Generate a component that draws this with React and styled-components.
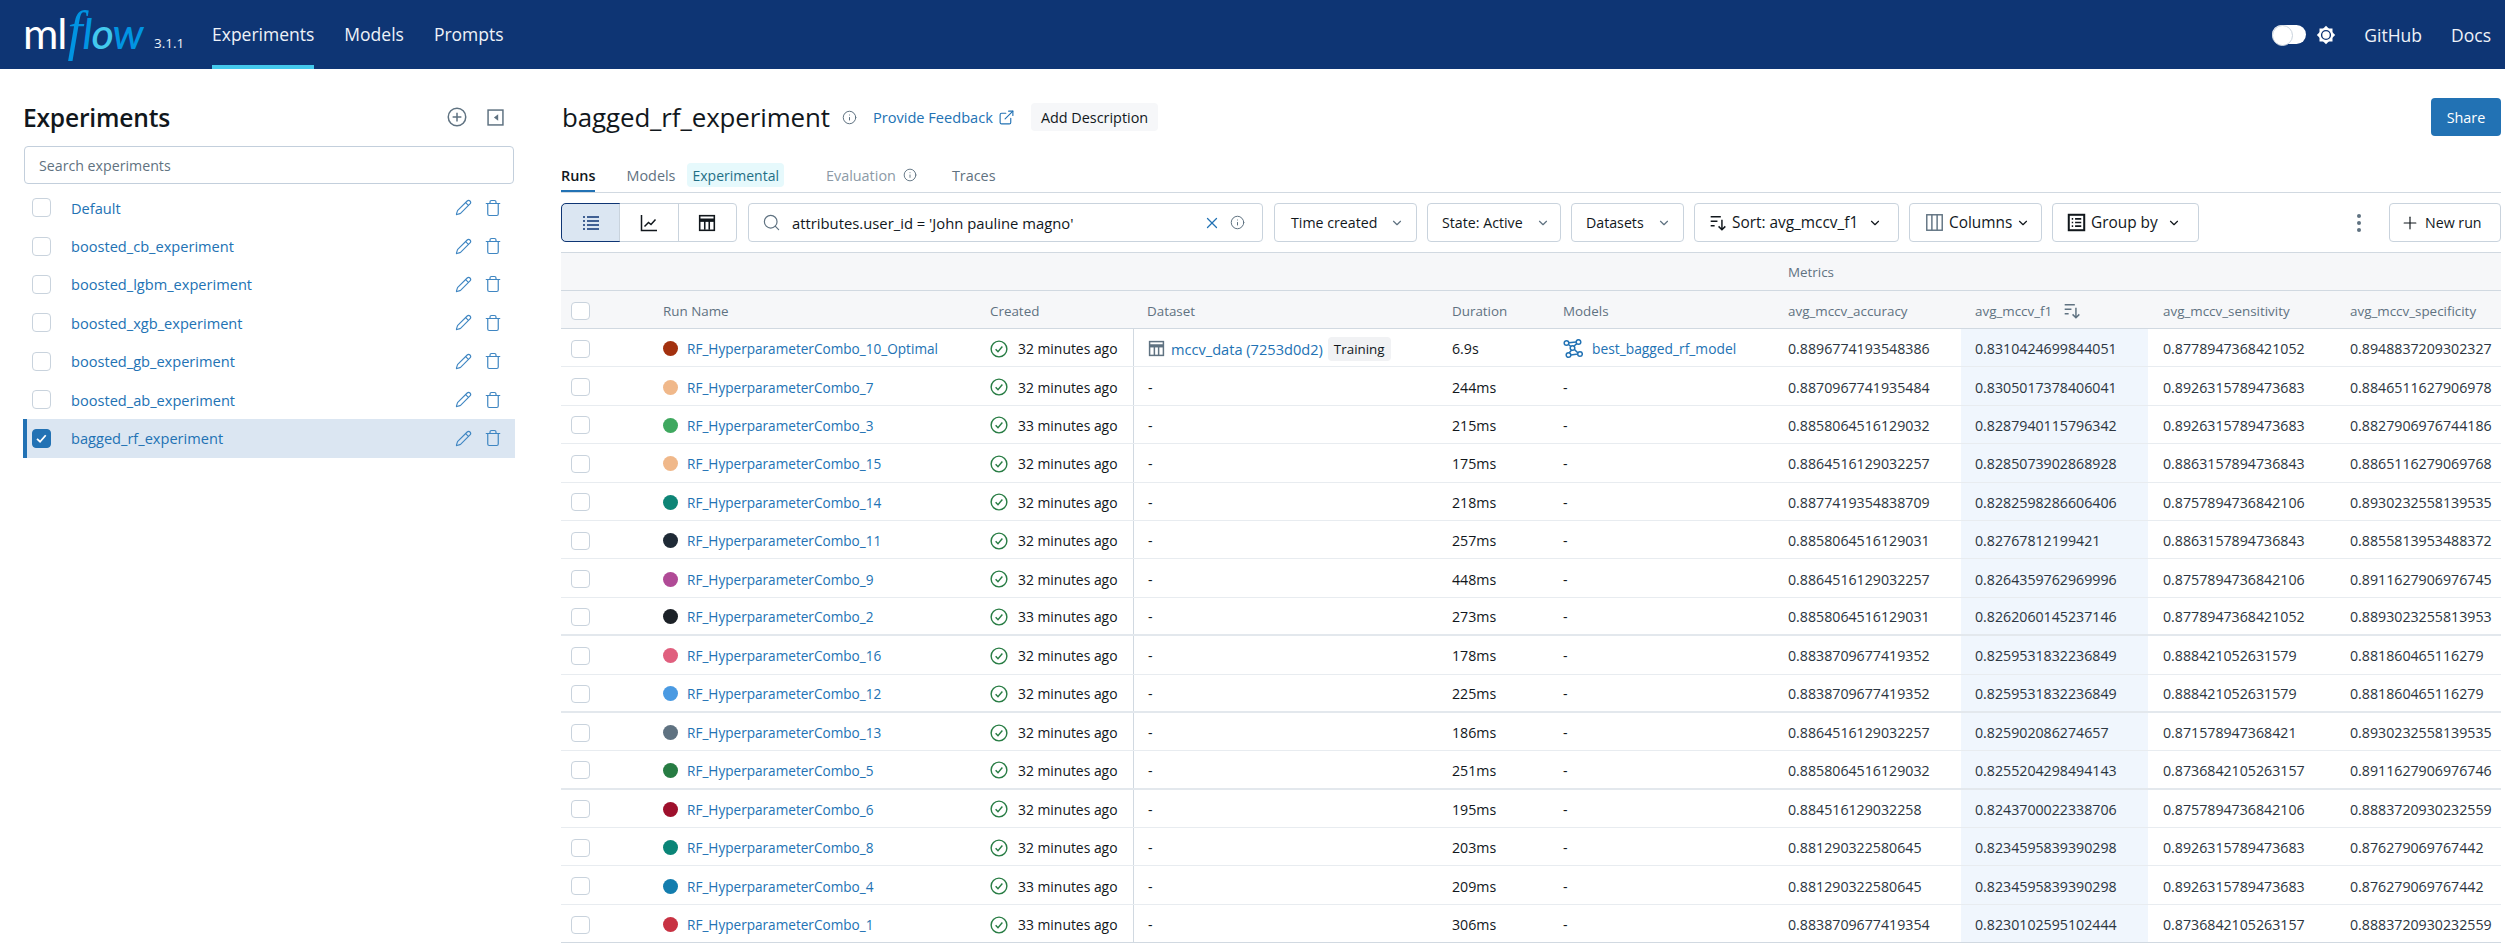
import React from 'react';
import styled, { createGlobalStyle } from 'styled-components';
import { Pencil, Trash, Search, X, Info, ExternalLink, Plus, ChevronDown } from 'lucide-react';

const FONT = '"Open Sans", "Noto Sans", "Liberation Sans", sans-serif';
const LINK = '#2272b4';
const TEXT = '#11171c';
const MUTED = '#5f7281';
const EDGE = '#c9d3dd';
const COLS = '102px 327px 143px 319px 111px 212px 186px 187px 188px 165px';

const Global = createGlobalStyle`
  html, body { margin: 0; padding: 0; background: #fff; }
  body { font-family: ${FONT}; color: ${TEXT}; font-size: 14px; overflow: hidden; }
  * { box-sizing: border-box; }
`;

const Page = styled.div`width: 2505px; height: 952px; display: flex; flex-direction: column; overflow: hidden;`;

const TopBar = styled.header`
  height: 69px; background: #0e3574; color: #eef2f8; display: flex; align-items: stretch; padding: 0 14px 0 23px; flex: none;
`;
const Logo = styled.div`
  width: 131px; height: 69px; display: flex; align-items: baseline; font-family: "Lato", sans-serif; font-size: 43px; line-height: 66px; letter-spacing: -1px; color: #fff; white-space: nowrap;
`;
const LogoFlow = styled.span`font-style: italic; color: #0194e2; font-weight: 500; margin-left: 1px;`;
const LogoF = styled.span`font-family: "Liberation Serif", serif; font-size: 54px; font-weight: 400; margin-right: 1px; line-height: 40px;`;
const LogoO = styled.span`color: #43c9ed;`;
const Version = styled.div`font-size: 13.5px; line-height: 1; align-self: flex-end; margin-bottom: 19px; width: 58px; color: #eef2f8;`;
const NavTab = styled.a`
  font-size: 17.5px; display: flex; align-items: center; height: 69px; margin-right: ${p => p.$gap}px; padding-bottom: 1px;
  border-bottom: 4px solid ${p => (p.$active ? '#43c9ed' : 'transparent')}; padding-top: 4px;
`;
const NavRight = styled.div`margin-left: auto; display: flex; align-items: center; font-size: 17.5px;`;
const Toggle = styled.div`
  width: 34px; height: 19px; border-radius: 10px; background: #fff; position: relative; margin-right: 10px;
  &::after { content: ''; position: absolute; left: 0; top: 0; width: 19px; height: 19px; border-radius: 50%; border: 1px solid #c9d3dd; background: #fff; }
`;
const NavLink = styled.a`margin-left: ${p => p.$gap}px;`;

const Body = styled.div`flex: 1; display: flex; min-height: 0;`;

const Sidebar = styled.aside`width: 561px; flex: none; padding: 29px 0 0 23px;`;
const SideInner = styled.div`width: 492px;`;
const SideHead = styled.div`height: 48px; display: flex; align-items: flex-start; justify-content: space-between; padding-right: 11px;`;
const SideTitle = styled.h2`margin: 0; font-size: 24.6px; font-weight: 600; line-height: 40px; letter-spacing: -0.2px;`;
const SideTools = styled.div`display: flex; gap: 20px; align-items: center; height: 38px; color: ${MUTED};`;
const SearchBox = styled.div`
  margin-left: 1px; width: 490px; height: 38px; border: 1px solid #c3cfdc; border-radius: 4px; padding-left: 14px; display: flex; align-items: center; color: ${MUTED}; font-size: 14.2px;
`;
const ExpList = styled.div`margin-top: 5px;`;
const ExpRow = styled.div`
  height: 38.4px; display: flex; align-items: center; color: ${LINK}; font-size: 14.6px;
  background: ${p => (p.$on ? '#dbe6f2' : 'transparent')};
  border-left: 4px solid ${p => (p.$on ? LINK : 'transparent')};
  padding: 0 13px 1px 5px;
`;
const Box = styled.span`
  display: inline-flex; align-items: center; justify-content: center; flex: none; width: ${p => p.$w || 19}px; height: ${p => p.$h || 19}px;
  border-radius: 4px; border: 1px solid ${p => (p.$on ? LINK : EDGE)}; background: ${p => (p.$on ? LINK : '#fff')};
`;
const ExpName = styled.span`margin-left: 20px; flex: 1;`;
const ExpIcons = styled.span`display: flex; gap: 12px; align-items: center; color: #3f86c2;`;

const Main = styled.main`flex: 1; min-width: 0; padding: 29px 4px 0 0;`;
const TitleRow = styled.div`height: 38px; display: flex; align-items: center;`;
const Title = styled.h1`margin: 0 0 0 1px; font-size: 25.9px; font-weight: 500; line-height: 38px; letter-spacing: -0.1px;`;
const TitleInfo = styled.span`display: flex; color: ${MUTED}; margin: 0 16px 0 12px;`;
const FeedLink = styled.a`color: ${LINK}; display: flex; align-items: center; gap: 5px; font-size: 14.6px;`;
const AddDesc = styled.span`margin-left: 16px; height: 28px; padding: 0 10px; display: flex; align-items: center; background: #f6f7f9; border-radius: 4px; font-size: 14.4px;`;
const Share = styled.button`
  margin-left: auto; width: 70px; height: 38px; background: ${LINK}; color: #fff; border: 0; border-radius: 4px; font: inherit; font-size: 14.4px; font-family: ${FONT};
`;

const Tabs = styled.nav`margin-top: 24px; height: 33px; border-bottom: 1px solid #d1d9e1; display: flex; font-size: 14.4px;`;
const Tab = styled.span`
  height: 32px; display: flex; align-items: center; margin-right: ${p => p.$gap || 0}px; color: ${p => p.$color || MUTED}; font-weight: ${p => (p.$active ? 600 : 500)};
  border-bottom: 2px solid ${p => (p.$active ? LINK : 'transparent')}; gap: 7px;
`;
const Chip = styled.span`height: 24px; padding: 0 5px; margin-left: 5px; display: flex; align-items: center; background: #e6f9fc; color: #1f6f86; border-radius: 4px; font-weight: 400; font-size: 14px;`;

const Toolbar = styled.div`margin-top: 10px; height: 39px; display: flex; align-items: stretch; font-size: 14.2px;`;
const Segs = styled.div`width: 176px; display: flex; border: 1px solid ${EDGE}; border-radius: 4px; margin-right: 11px;`;
const Seg = styled.span`
  flex: 1; display: flex; align-items: center; justify-content: center; border-left: 1px solid ${EDGE};
  &:first-child { border-left: 0; background: #dbe6f2; outline: 1px solid #0e3574; border-radius: 4px 0 0 4px; }
`;
const SearchField = styled.div`width: 515px; border: 1px solid ${EDGE}; border-radius: 4px; display: flex; align-items: center; padding: 0 17px 0 13px; margin-right: 11px;`;
const Query = styled.span`margin-left: 11px; flex: 1; white-space: nowrap; font-size: 14.8px;`;
const QueryInfo = styled.span`display: flex; margin-left: 9px; color: ${MUTED};`;
const Pick = styled.div`
  width: ${p => p.$w}px; flex: none; border: 1px solid ${EDGE}; border-radius: 4px; display: flex; align-items: center; padding-left: ${p => p.$pad}px; margin-right: ${p => p.$gap ?? 10}px; white-space: nowrap;
`;
const PickText = styled.span`margin-left: ${p => p.$lead || 0}px; width: ${p => p.$tw}px; flex: none; font-size: ${p => p.$fs || 14.2}px;`;
const Dots = styled.span`margin-left: auto; margin-right: 27px; display: flex; flex-direction: column; gap: 3px; justify-content: center; align-items: center; width: 6px;`;
const Dot = styled.i`width: 4px; height: 4px; border-radius: 50%; background: ${MUTED};`;
const NewRun = styled.div`width: 112px; border: 1px solid ${EDGE}; border-radius: 4px; display: flex; align-items: center; padding-left: 10px; gap: 5px;`;

const Table = styled.div`margin-top: 10px; width: 1940px; font-size: 14.2px;`;
const GroupHead = styled.div`display: grid; grid-template-columns: ${COLS}; height: 39px; background: #f6f7f9; border-top: 1px solid #d1d9e1; border-bottom: 1px solid #d1d9e1; align-items: center; color: ${MUTED}; font-size: 13.4px; font-weight: 500;`;
const GroupLabel = styled.span`grid-column: 7; padding-left: 13px;`;
const HeadRow = styled.div`display: grid; grid-template-columns: ${COLS}; height: 38px; padding-top: 2px; background: #f6f7f9; border-bottom: 1px solid #d1d9e1; align-items: center; color: ${MUTED}; font-size: 13.4px; font-weight: 500;`;
const HeadCell = styled.span`padding-left: ${p => p.$pad || 0}px; display: flex; align-items: center; gap: 11px; white-space: nowrap;`;
const Row = styled.div`
  display: grid; grid-template-columns: ${COLS}; height: 38.4px; align-items: stretch;
  border-bottom: ${p => (p.$last ? '1px solid #d1d9e1' : p.$thick ? '2px solid #e3e8ed' : '1px solid #e8ecf0')};
`;
const Cell = styled.div`
  display: flex; align-items: center; white-space: nowrap; min-width: 0; padding-top: 2px;
  padding-left: ${p => p.$pad || 0}px;
  ${p => p.$sep && 'border-left: 1px solid #d1d9e1;'}
  ${p => p.$hot && 'background: #f0f6fd;'}
  ${p => p.$metric && 'color: #2b3540;'}
`;
const RunDot = styled.span`width: 15px; height: 15px; border-radius: 50%; background: ${p => p.$c}; margin-right: 9px; flex: none;`;
const RunLink = styled.a`color: ${LINK}; font-size: 13.6px;`;
const TimeText = styled.span`margin-left: 10px; font-size: 13.9px;`;
const DataLink = styled.a`color: ${LINK}; margin-left: 6px; font-size: 14.6px;`;
const Badge = styled.span`margin-left: 5px; background: #f1f2f4; border-radius: 4px; padding: 2px 6px; font-size: 13.4px; line-height: 20px;`;
const ModelLink = styled.a`color: ${LINK}; margin-left: 9px; font-size: 13.8px;`;

const Svg = ({ s = 16, children, vb = 16, c = 'currentColor', sw = 1.3 }) => (
  <svg width={s} height={s} viewBox={`0 0 ${vb} ${vb}`} fill="none" stroke={c} strokeWidth={sw}>{children}</svg>
);
const SortIcon = ({ c = TEXT }) => (
  <Svg s={18} c={c}><path d="M1.5 2.5h9M1.5 6.5h6M1.5 10.5h3.5M11.5 5v9M8.5 11l3 3 3-3" /></Svg>
);
const TableIcon = ({ s = 18, c = TEXT }) => (
  <Svg s={s} c={c} sw={1.4}><rect x="1.5" y="1.5" width="13" height="13" /><path d="M1.5 5.5h13" strokeWidth="3" /><path d="M6 6v8M10 6v8" /></Svg>
);
const CircleCheck = () => (
  <Svg s={18} c="#277c43" sw={1.25}><circle cx="8" cy="8" r="7" /><path d="M5 8.2l2.1 2.2L11 5.8" /></Svg>
);
const Check = () => (
  <Svg s={13} c="#fff" sw={2.2}><path d="M2.5 8.5l3.7 3.5 7-8" /></Svg>
);
const ModelIcon = () => (
  <Svg s={20} c={LINK} sw={1.5} vb={20}>
    <circle cx="3.5" cy="4" r="2.3" /><circle cx="15.5" cy="3" r="2.3" /><circle cx="5.5" cy="16" r="2.3" /><circle cx="17" cy="15" r="2.3" /><circle cx="9.5" cy="9" r="2.3" />
    <path d="M5.5 5.5l2.4 2M13.8 4.6l-3 2.6M6.2 13.8l2.5-2.7M15 14l-3.5-3.5M5.8 3.7l7.4-.6M7.8 16l7-1" />
  </Svg>
);
const SunIcon = () => (
  <svg width="20" height="20" viewBox="0 0 20 20">
    <rect x="3.5" y="3.5" width="13" height="13" fill="#fff" />
    <rect x="3.5" y="3.5" width="13" height="13" fill="#fff" transform="rotate(45 10 10)" />
    <circle cx="10" cy="10" r="4.4" fill="none" stroke="#0e3574" strokeWidth="1.4" />
  </svg>
);
const CollapseIcon = () => (
  <Svg s={17} c={MUTED} sw={1.4}><rect x="1" y="1" width="14" height="14" /><path d="M10.5 5v6L6.5 8z" fill={MUTED} stroke="none" /></Svg>
);
const ListIcon = () => (
  <Svg s={20} c="#0e3574" sw={1.5} vb={20}><path d="M2 4h2M6 4h12M2 8h2M6 8h12M2 12h2M6 12h12M2 16h2M6 16h12" /></Svg>
);
const ChartIcon = () => (
  <Svg s={20} c={TEXT} sw={1.5} vb={20}><path d="M2.5 2v15.5H18M5.5 13.5l4-4 2.5 2 4.5-5" /></Svg>
);
const ColumnsIcon = () => (
  <Svg s={19} c={MUTED} sw={1.2}><rect x="1.5" y="1.5" width="13" height="13" /><path d="M5.8 1.5v13M10.2 1.5v13" /></Svg>
);
const GroupIcon = () => (
  <Svg s={19} c={TEXT} sw={1.4}><rect x="1.5" y="1.5" width="13" height="13" strokeWidth="1.7" /><path d="M4 5h1.2M6.8 5H12M4 8h1.2M6.8 8H12M4 11h1.2M6.8 11H12" /></Svg>
);
const Chev = ({ c = MUTED }) => <ChevronDown size={14} color={c} strokeWidth={2} />;

const experiments = ['Default', 'boosted_cb_experiment', 'boosted_lgbm_experiment', 'boosted_xgb_experiment', 'boosted_gb_experiment', 'boosted_ab_experiment', 'bagged_rf_experiment'];

const runs = [
  ['10_Optimal', '#a3310f', '32', '6.9s', '0.8896774193548386', '0.8310424699844051', '0.8778947368421052', '0.8948837209302327'],
  ['7', '#f0b88a', '32', '244ms', '0.8870967741935484', '0.8305017378406041', '0.8926315789473683', '0.8846511627906978'],
  ['3', '#3fa85f', '33', '215ms', '0.8858064516129032', '0.8287940115796342', '0.8926315789473683', '0.8827906976744186'],
  ['15', '#f0b88a', '32', '175ms', '0.8864516129032257', '0.8285073902868928', '0.8863157894736843', '0.8865116279069768'],
  ['14', '#0e8576', '32', '218ms', '0.8877419354838709', '0.8282598286606406', '0.8757894736842106', '0.8930232558139535'],
  ['11', '#1f2a36', '32', '257ms', '0.8858064516129031', '0.82767812199421', '0.8863157894736843', '0.8855813953488372'],
  ['9', '#b04a96', '32', '448ms', '0.8864516129032257', '0.8264359762969996', '0.8757894736842106', '0.8911627906976745'],
  ['2', '#1c2127', '33', '273ms', '0.8858064516129031', '0.8262060145237146', '0.8778947368421052', '0.8893023255813953'],
  ['16', '#e05f7e', '32', '178ms', '0.8838709677419352', '0.8259531832236849', '0.888421052631579', '0.881860465116279'],
  ['12', '#4a9ae2', '32', '225ms', '0.8838709677419352', '0.8259531832236849', '0.888421052631579', '0.881860465116279'],
  ['13', '#5f7281', '32', '186ms', '0.8864516129032257', '0.825902086274657', '0.871578947368421', '0.8930232558139535'],
  ['5', '#277c43', '32', '251ms', '0.8858064516129032', '0.8255204298494143', '0.8736842105263157', '0.8911627906976746'],
  ['6', '#9e102c', '32', '195ms', '0.884516129032258', '0.8243700022338706', '0.8757894736842106', '0.8883720930232559'],
  ['8', '#0a8577', '32', '203ms', '0.881290322580645', '0.8234595839390298', '0.8926315789473683', '0.876279069767442'],
  ['4', '#137dae', '33', '209ms', '0.881290322580645', '0.8234595839390298', '0.8926315789473683', '0.876279069767442'],
  ['1', '#c83243', '33', '306ms', '0.8838709677419354', '0.8230102595102444', '0.8736842105263157', '0.8883720930232559'],
];
const thickAfter = [7, 9, 11];

export default function App() {
  return (
    <Page>
      <Global />
      <TopBar>
        <Logo>ml<LogoFlow><LogoF>f</LogoF>l<LogoO>o</LogoO>w</LogoFlow></Logo>
        <Version>3.1.1</Version>
        <NavTab $active $gap={30}>Experiments</NavTab>
        <NavTab $gap={30}>Models</NavTab>
        <NavTab>Prompts</NavTab>
        <NavRight>
          <Toggle />
          <SunIcon />
          <NavLink $gap={28}>GitHub</NavLink>
          <NavLink $gap={29}>Docs</NavLink>
        </NavRight>
      </TopBar>
      <Body>
        <Sidebar>
          <SideInner>
            <SideHead>
              <SideTitle>Experiments</SideTitle>
              <SideTools>
                <Svg s={20} c={MUTED} sw={1.2}><circle cx="8" cy="8" r="7" /><path d="M8 4.5v7M4.5 8h7" /></Svg>
                <CollapseIcon />
              </SideTools>
            </SideHead>
            <SearchBox>Search experiments</SearchBox>
            <ExpList>
              {experiments.map((e, i) => (
                <ExpRow key={e} $on={i === 6}>
                  <Box $on={i === 6}>{i === 6 && <Check />}</Box>
                  <ExpName>{e}</ExpName>
                  <ExpIcons><Pencil size={17} strokeWidth={1.6} /><Trash size={18} strokeWidth={1.6} /></ExpIcons>
                </ExpRow>
              ))}
            </ExpList>
          </SideInner>
        </Sidebar>
        <Main>
          <TitleRow>
            <Title>bagged_rf_experiment</Title>
            <TitleInfo><Info size={15} strokeWidth={1.6} /></TitleInfo>
            <FeedLink>Provide Feedback <ExternalLink size={17} strokeWidth={1.6} /></FeedLink>
            <AddDesc>Add Description</AddDesc>
            <Share>Share</Share>
          </TitleRow>
          <Tabs>
            <Tab $active $gap={31} $color={TEXT}>Runs</Tab>
            <Tab $gap={42}>Models<Chip>Experimental</Chip></Tab>
            <Tab $gap={35} $color="#8c9aa6">Evaluation <Info size={14} strokeWidth={1.6} color={MUTED} /></Tab>
            <Tab>Traces</Tab>
          </Tabs>
          <Toolbar>
            <Segs>
              <Seg><ListIcon /></Seg>
              <Seg><ChartIcon /></Seg>
              <Seg><TableIcon /></Seg>
            </Segs>
            <SearchField>
              <Search size={19} color={MUTED} strokeWidth={1.5} />
              <Query>attributes.user_id = 'John pauline magno'</Query>
              <X size={18} color={LINK} strokeWidth={1.7} />
              <QueryInfo><Info size={15} strokeWidth={1.6} /></QueryInfo>
            </SearchField>
            <Pick $w={143} $pad={16}><PickText $tw={99}>Time created</PickText><Chev /></Pick>
            <Pick $w={134} $pad={14}><PickText $tw={94}>State: Active</PickText><Chev /></Pick>
            <Pick $w={113} $pad={14}><PickText $tw={71}>Datasets</PickText><Chev /></Pick>
            <Pick $w={205} $pad={14}><SortIcon /><PickText $lead={5} $tw={136} $fs={15.4}>Sort: avg_mccv_f1</PickText><Chev c={TEXT} /></Pick>
            <Pick $w={133} $pad={15}><ColumnsIcon /><PickText $lead={5} $tw={67} $fs={15.4}>Columns</PickText><Chev c={TEXT} /></Pick>
            <Pick $w={147} $pad={14} $gap={0}><GroupIcon /><PickText $lead={5} $tw={76} $fs={15.4}>Group by</PickText><Chev c={TEXT} /></Pick>
            <Dots><Dot /><Dot /><Dot /></Dots>
            <NewRun><Plus size={20} strokeWidth={1.4} />New run</NewRun>
          </Toolbar>
          <Table>
            <GroupHead><GroupLabel>Metrics</GroupLabel></GroupHead>
            <HeadRow>
              <HeadCell $pad={10}><Box $w={19} $h={18} /></HeadCell>
              <HeadCell>Run Name</HeadCell>
              <HeadCell>Created</HeadCell>
              <HeadCell $pad={14}>Dataset</HeadCell>
              <HeadCell>Duration</HeadCell>
              <HeadCell>Models</HeadCell>
              <HeadCell $pad={13}>avg_mccv_accuracy</HeadCell>
              <HeadCell $pad={14}>avg_mccv_f1 <SortIcon c={MUTED} /></HeadCell>
              <HeadCell $pad={15}>avg_mccv_sensitivity</HeadCell>
              <HeadCell $pad={14}>avg_mccv_specificity</HeadCell>
            </HeadRow>
            {runs.map((r, i) => (
              <Row key={r[0]} $last={i === runs.length - 1} $thick={thickAfter.includes(i)}>
                <Cell $pad={10}><Box $w={19} $h={18} /></Cell>
                <Cell><RunDot $c={r[1]} /><RunLink>RF_HyperparameterCombo_{r[0]}</RunLink></Cell>
                <Cell><CircleCheck /><TimeText>{r[2]} minutes ago</TimeText></Cell>
                <Cell $sep $pad={14}>
                  {i === 0 ? (<><TableIcon s={17} c={MUTED} /><DataLink>mccv_data (7253d0d2)</DataLink><Badge>Training</Badge></>) : '-'}
                </Cell>
                <Cell>{r[3]}</Cell>
                <Cell>{i === 0 ? (<><ModelIcon /><ModelLink>best_bagged_rf_model</ModelLink></>) : '-'}</Cell>
                <Cell $metric $pad={13}>{r[4]}</Cell>
                <Cell $metric $hot $pad={14}>{r[5]}</Cell>
                <Cell $metric $pad={15}>{r[6]}</Cell>
                <Cell $metric $pad={14}>{r[7]}</Cell>
              </Row>
            ))}
          </Table>
        </Main>
      </Body>
    </Page>
  );
}
